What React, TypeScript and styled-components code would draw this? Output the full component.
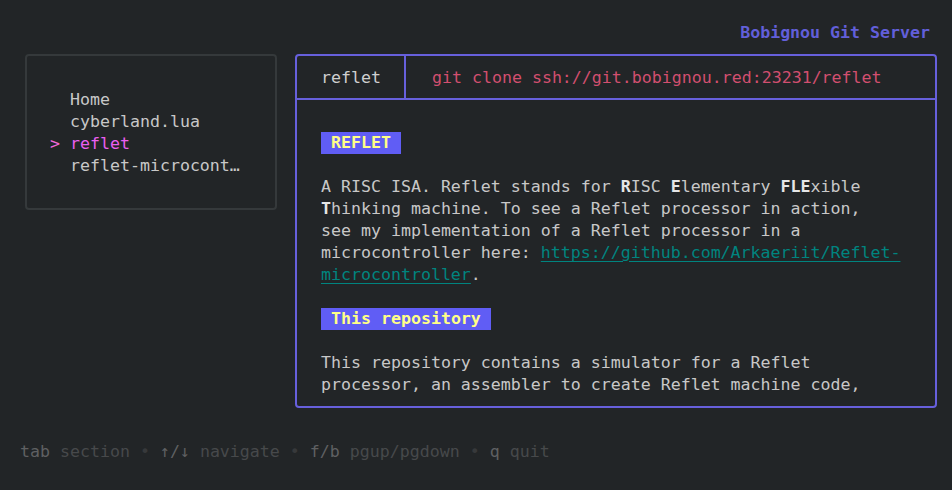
import React from "react";
import styled, { createGlobalStyle } from "styled-components";

const Global = createGlobalStyle`
  html, body { margin: 0; padding: 0; background: #222527; }
  body { font-family: "DejaVu Sans Mono", "Liberation Mono", monospace; font-size: 16.6px; line-height: 22px; color: #c8c8c8; }
`;

const Page = styled.div`
  width: 952px;
  height: 490px;
  background: #222527;
  display: flex;
  flex-direction: column;
  overflow: hidden;
`;

const TopBar = styled.div`
  margin-top: 22px;
  height: 22px;
  flex-shrink: 0;
  display: flex;
  justify-content: flex-end;
  padding-right: 22px;
`;

const Title = styled.span`
  color: #625fd9;
  font-weight: bold;
`;

const Main = styled.div`
  margin-top: 10px;
  flex-shrink: 0;
  display: flex;
  align-items: flex-start;
  gap: 18px;
  padding-left: 25px;
`;

const Sidebar = styled.nav`
  box-sizing: border-box;
  width: 252px;
  height: 156px;
  border: 2px solid #35393b;
  border-radius: 4px;
  padding: 33px 0 0 23px;
  display: flex;
  flex-direction: column;
`;

const Item = styled.div<{ $active?: boolean }>`
  display: flex;
  white-space: pre;
  color: ${(p) => (p.$active ? "#ea5ff0" : "#c8c8c8")};
`;

const Caret = styled.span`
  width: 20px;
  color: #f268d8;
`;

const Panel = styled.section`
  box-sizing: border-box;
  width: 642px;
  height: 354px;
  border: 2px solid #6760dc;
  border-radius: 4px;
  display: flex;
  flex-direction: column;
  overflow: hidden;
`;

const PanelHead = styled.div`
  display: flex;
  flex-shrink: 0;
  height: 44px;
  box-sizing: border-box;
  border-bottom: 2px solid #6760dc;
`;

const RepoName = styled.div`
  box-sizing: border-box;
  width: 109px;
  padding: 11px 0 0 24px;
  border-right: 2px solid #6760dc;
  color: #cfcfcf;
`;

const Clone = styled.div`
  padding: 11px 0 0 26px;
  color: #d24f6f;
  white-space: pre;
`;

const Body = styled.div`
  flex: 1;
  min-height: 0;
  padding: 32px 0 0 24px;
  display: flex;
  flex-direction: column;
  overflow: hidden;
`;

const Heading = styled.div`
  align-self: flex-start;
  flex-shrink: 0;
  background: #605df5;
  color: #ffff87;
  font-weight: bold;
  white-space: pre;
  padding: 0 10px;
  margin-bottom: 22px;
`;

const Para = styled.div`
  flex-shrink: 0;
  margin-bottom: 22px;
  color: #c8c8c8;
`;

const Line = styled.div`
  white-space: pre;
  height: 22px;
`;

const B = styled.b`
  color: #e6e6e6;
`;

const Link = styled.span`
  color: #00847f;
  text-decoration: underline;
  text-underline-offset: 3px;
`;

const Footer = styled.div`
  margin-top: 33px;
  padding-left: 20px;
  display: flex;
  white-space: pre;
`;

const Key = styled.span`
  color: #5f6062;
`;

const Desc = styled.span`
  color: #47494b;
`;

const Dot = styled.span`
  color: #37393b;
`;

const items = ["Home", "cyberland.lua", "reflet", "reflet-microcont…"];

const help: [string, string][] = [
  ["tab", "section"],
  ["↑/↓", "navigate"],
  ["f/b", "pgup/pgdown"],
  ["q", "quit"],
];

export default function App() {
  return (
    <Page>
      <Global />
      <TopBar>
        <Title>Bobignou Git Server</Title>
      </TopBar>
      <Main>
        <Sidebar>
          {items.map((it) => (
            <Item key={it} $active={it === "reflet"}>
              <Caret>{it === "reflet" ? ">" : " "}</Caret>
              {it}
            </Item>
          ))}
        </Sidebar>
        <Panel>
          <PanelHead>
            <RepoName>reflet</RepoName>
            <Clone>git clone ssh://git.bobignou.red:23231/reflet</Clone>
          </PanelHead>
          <Body>
            <Heading>REFLET</Heading>
            <Para>
              <Line>
                A RISC ISA. Reflet stands for <B>R</B>ISC <B>E</B>lementary <B>FLE</B>xible
              </Line>
              <Line>
                <B>T</B>hinking machine. To see a Reflet processor in action,
              </Line>
              <Line>see my implementation of a Reflet processor in a</Line>
              <Line>
                microcontroller here: <Link>https://github.com/Arkaeriit/Reflet-</Link>
              </Line>
              <Line>
                <Link>microcontroller</Link>.
              </Line>
            </Para>
            <Heading>This repository</Heading>
            <Para>
              <Line>This repository contains a simulator for a Reflet</Line>
              <Line>processor, an assembler to create Reflet machine code,</Line>
            </Para>
          </Body>
        </Panel>
      </Main>
      <Footer>
        {help.map(([k, d], i) => (
          <React.Fragment key={k}>
            {i > 0 && <Dot> • </Dot>}
            <Key>{k}</Key>
            <Desc> {d}</Desc>
          </React.Fragment>
        ))}
      </Footer>
    </Page>
  );
}
